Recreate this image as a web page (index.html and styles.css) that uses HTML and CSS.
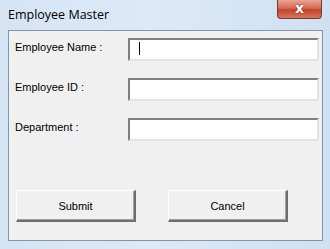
FILE: index.html
```html
<!DOCTYPE html>
<html>
<head>
<meta charset="utf-8">
<link rel="stylesheet" href="styles.css">
</head>
<body>
<div class="window">
  <div class="titlebar">
    <span class="title">Employee Master</span>
    <div class="close"><span>x</span></div>
  </div>
  <div class="client">
    <div class="row">
      <span class="label">Employee Name :</span>
      <div class="field"><span class="caret"></span></div>
    </div>
    <div class="row">
      <span class="label">Employee ID :</span>
      <div class="field"></div>
    </div>
    <div class="row">
      <span class="label">Department :</span>
      <div class="field"></div>
    </div>
    <div class="buttons">
      <div class="btn">Submit</div>
      <div class="btn">Cancel</div>
    </div>
  </div>
</div>
</body>
</html>
```
FILE: styles.css
```css
html, body {
  margin: 0;
  padding: 0;
}
body {
  width: 330px;
  height: 249px;
  overflow: hidden;
  font-family: "Liberation Sans", "DejaVu Sans", sans-serif;
}
.window {
  width: 330px;
  height: 249px;
  box-sizing: border-box;
  background: linear-gradient(90deg, #d5e4f4 0%, #dce9f7 45%, #cfe0f3 100%);
  display: flex;
  flex-direction: column;
}
.titlebar {
  height: 30px;
  display: flex;
  justify-content: space-between;
  align-items: flex-start;
  padding-left: 8px;
  padding-right: 8px;
}
.title {
  font-family: "Open Sans", "Liberation Sans", sans-serif;
  font-size: 12.5px;
  color: #000;
  margin-top: 6px;
}
.close {
  width: 45px;
  height: 19px;
  box-sizing: border-box;
  border: 1px solid #7a3a2e;
  border-top: none;
  border-radius: 0 0 4px 4px;
  background: linear-gradient(180deg, #e8a594 0%, #d46b55 45%, #c4412a 55%, #d9765c 100%);
  display: flex;
  align-items: center;
  justify-content: center;
}
.close span {
  font-family: "DejaVu Sans", sans-serif;
  font-weight: bold;
  font-size: 14px;
  color: #fff;
  line-height: 1;
  margin-top: -3px;
  text-shadow: 0 0 2px #6a2010;
}
.client {
  margin: 0 7px 0 8px;
  height: 211px;
  box-sizing: border-box;
  border: 1px solid #8395ab;
  background: #f0f0f0;
  padding: 7px 3px 0 6px;
  display: flex;
  flex-direction: column;
  gap: 17px;
}
.row {
  display: flex;
  align-items: center;
  height: 23px;
}
.label {
  width: 113px;
  font-size: 11px;
  color: #000;
  margin-top: -6px;
}
.field {
  width: 191px;
  height: 23px;
  box-sizing: border-box;
  background: #fff;
  border-top: 2px solid #7f7f7f;
  border-left: 2px solid #7f7f7f;
  border-right: 2px solid #e3e3e3;
  border-bottom: 2px solid #e3e3e3;
  position: relative;
}
.caret {
  position: absolute;
  left: 9px;
  top: 2px;
  width: 1px;
  height: 13px;
  background: #000;
}
.buttons {
  margin-top: 32px;
  display: flex;
  gap: 32px;
  padding-left: 1px;
}
.btn {
  width: 120px;
  height: 32px;
  box-sizing: border-box;
  background: #f0f0f0;
  border-top: 1px solid #ffffff;
  border-left: 1px solid #ffffff;
  border-right: 2px solid #6e6e6e;
  border-bottom: 2px solid #6e6e6e;
  box-shadow: inset -1px -1px 0 #a0a0a0;
  display: flex;
  align-items: center;
  justify-content: center;
  font-size: 11px;
  color: #000;
}
```
